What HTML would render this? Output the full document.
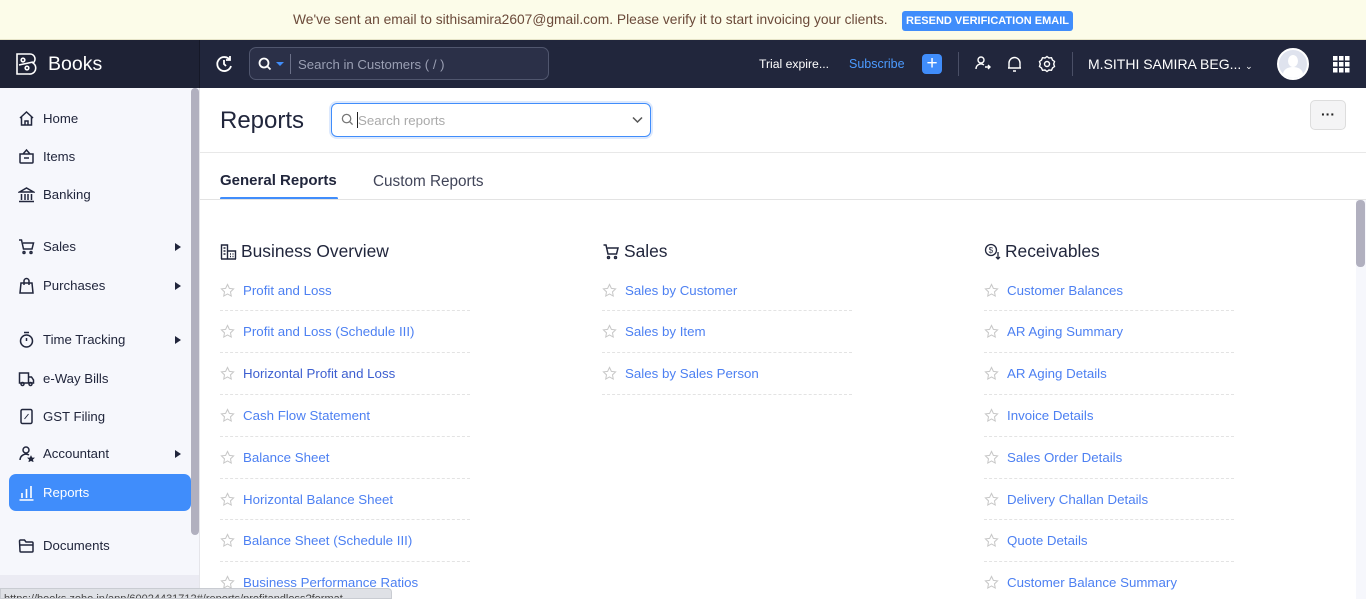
<!DOCTYPE html>
<html><head><meta charset="utf-8"><style>
*{box-sizing:border-box;margin:0;padding:0}
body{width:1366px;height:599px;overflow:hidden;font-family:"Liberation Sans",sans-serif;background:#fff;position:relative;color:#21263c}
.abs{position:absolute}
.banner{left:0;top:0;width:1366px;height:40px;background:#fcfce9;border-bottom:1px solid #e6e4c8}
.banner .t{left:293px;top:12px;font-size:13.8px;color:#6b4a3a}
.btn{left:902px;top:11px;width:171px;height:20px;background:#408dfb;color:#fff;font-size:11px;font-weight:bold;border-radius:3px;text-align:center;line-height:20px}
.top{left:0;top:40px;width:1366px;height:48px;background:#21263c}
.logo{left:0;top:40px;width:200px;height:48px;background:#1e2235;border-right:1px solid #151827}
.side{left:0;top:88px;width:200px;height:511px;background:#f6f7fc;border-right:1px solid #e5e5ea}
.nav{position:absolute;left:18px;font-size:13.2px;color:#21263c;display:flex;align-items:center;gap:8px;margin-top:1px}
.nav svg{width:17px;height:17px}
.arr{position:absolute;left:175px;width:0;height:0;border-left:6px solid #21263c;border-top:4px solid transparent;border-bottom:4px solid transparent}
.link{position:absolute;font-size:13.3px;color:#4d80f2;display:flex;align-items:center;gap:8px;margin-top:1px}
.link svg{width:15px;height:15px}
.div{position:absolute;width:250px;border-top:1px dashed #e3e3e3}
.h{position:absolute;font-size:17.4px;color:#21263c;display:flex;align-items:center;gap:4px;margin-top:1px}
</style></head><body>
<div class="abs banner"><div class="abs t">We've sent an email to sithisamira2607@gmail.com. Please verify it to start invoicing your clients.</div><div class="abs btn">RESEND VERIFICATION EMAIL</div></div>
<div class="abs top"></div>
<div class="abs logo">
<svg class="abs" style="left:15px;top:12px" width="25" height="24" viewBox="0 0 25 24" fill="none" stroke="#fff" stroke-width="1.6"><path d="M2 2h13a5 5 0 0 1 3 9a6 6 0 0 1-4 11H2z"/><circle cx="8" cy="8" r="1.8"/><circle cx="12" cy="16" r="1.8"/><path d="M4 13l14-3"/></svg>
<div class="abs" style="left:48px;top:13px;font-size:19.5px;color:#fff">Books</div></div>
<svg class="abs" style="left:215px;top:55px" width="18" height="18" viewBox="0 0 18 18" fill="none" stroke="#fff" stroke-width="1.8"><path d="M15 5A7 7 0 1 0 16 11"/><path d="M15 1v4h-4"/><path d="M9 5v4l2 2"/></svg>
<div class="abs" style="left:249px;top:47px;width:300px;height:33px;border:1px solid #50566e;border-radius:7px;background:#2b3048"></div>
<svg class="abs" style="left:258px;top:57px" width="14" height="14" viewBox="0 0 14 14" fill="none" stroke="#fff" stroke-width="1.8"><circle cx="6" cy="6" r="4.5"/><path d="M9.5 9.5l3 3"/></svg>
<div class="abs" style="left:276px;top:62px;width:0;height:0;border-top:4px solid #408dfb;border-left:4px solid transparent;border-right:4px solid transparent"></div>
<div class="abs" style="left:290px;top:54px;width:1px;height:20px;background:#6b7088"></div>
<div class="abs" style="left:298px;top:57px;font-size:13.2px;color:#9a9fb3">Search in Customers ( / )</div>
<div class="abs" style="left:759px;top:57px;font-size:12.2px;color:#fff">Trial expire...</div>
<div class="abs" style="left:849px;top:57px;font-size:12.5px;color:#4c9bff">Subscribe</div>
<div class="abs" style="left:922px;top:54px;width:20px;height:20px;background:#408dfb;border-radius:4px;color:#fff;text-align:center;font-size:19px;line-height:20px">+</div>
<div class="abs" style="left:958px;top:52px;width:1px;height:24px;background:#4a4f66"></div>
<svg class="abs" style="left:974px;top:55px" width="18" height="18" viewBox="0 0 18 18" fill="none" stroke="#fff" stroke-width="1.4"><circle cx="7" cy="5" r="3"/><path d="M2 14a5 5 0 0 1 8-4"/><path d="M11 12h5M14 10l2 2-2 2"/></svg>
<svg class="abs" style="left:1006px;top:55px" width="17" height="18" viewBox="0 0 17 18" fill="none" stroke="#fff" stroke-width="1.4"><path d="M3 13V8a5.5 5.5 0 0 1 11 0v5H3zM2 13h13M7 16h3"/></svg>
<svg class="abs" style="left:1038px;top:55px" width="18" height="18" viewBox="0 0 18 18" fill="none" stroke="#fff" stroke-width="1.4"><circle cx="9" cy="9" r="2.5"/><path d="M9 1.5l2 1.5 2.5-.3 1 2.3 2 1.5-.8 2.5.8 2.5-2 1.5-1 2.3-2.5-.3-2 1.5-2-1.5-2.5.3-1-2.3-2-1.5.8-2.5-.8-2.5 2-1.5 1-2.3 2.5.3z"/></svg>
<div class="abs" style="left:1072px;top:52px;width:1px;height:24px;background:#4a4f66"></div>
<div class="abs" style="left:1088px;top:56px;font-size:14px;color:#fff">M.SITHI SAMIRA BEG... <span style="font-size:9px">&#8964;</span></div>
<div class="abs" style="left:1277px;top:48px;width:32px;height:32px;border-radius:50%;background:#dfe3ee;border:2px solid #fff;overflow:hidden"><div class="abs" style="left:9px;top:5px;width:10px;height:12px;border-radius:50%;background:#fff"></div><div class="abs" style="left:4px;top:17px;width:20px;height:14px;border-radius:50% 50% 0 0;background:#fff"></div></div>
<svg class="abs" style="left:1333px;top:56px" width="17" height="17" viewBox="0 0 17 17" fill="#fff"><rect x="0" y="0" width="4.5" height="4.5"/><rect x="6" y="0" width="4.5" height="4.5"/><rect x="12" y="0" width="4.5" height="4.5"/><rect x="0" y="6" width="4.5" height="4.5"/><rect x="6" y="6" width="4.5" height="4.5"/><rect x="12" y="6" width="4.5" height="4.5"/><rect x="0" y="12" width="4.5" height="4.5"/><rect x="6" y="12" width="4.5" height="4.5"/><rect x="12" y="12" width="4.5" height="4.5"/></svg>

<div class="abs side">
<div class="abs" style="left:191px;top:0;width:8px;height:447px;background:#b1b0bf;border-radius:4px"></div>
<div class="abs" style="left:0;top:487px;width:199px;height:24px;background:#ebebf3"></div>
</div>
<div class="nav" style="top:109px"><svg viewBox="0 0 17 17" fill="none" stroke="#21263c" stroke-width="1.5"><path d="M2 8l6.5-6 6.5 6M3.5 7v8h10V7M7 15v-4h3v4"/></svg>Home</div>
<div class="nav" style="top:147px"><svg viewBox="0 0 17 17" fill="none" stroke="#21263c" stroke-width="1.5"><path d="M5 6l3.5-4 3.5 4M2 6h13v8a1 1 0 0 1-1 1H3a1 1 0 0 1-1-1zM6 10h5"/></svg>Items</div>
<div class="nav" style="top:185px"><svg viewBox="0 0 17 17" fill="none" stroke="#21263c" stroke-width="1.5"><path d="M1.5 6l7-4 7 4zM3.5 8v6M7 8v6M10 8v6M13.5 8v6M1 15.5h15"/></svg>Banking</div>
<div class="nav" style="top:237px"><svg viewBox="0 0 17 17" fill="none" stroke="#21263c" stroke-width="1.5"><path d="M1 2h2.5l2 9h8.5l1.5-6H5"/><circle cx="6" cy="14.5" r="1"/><circle cx="13" cy="14.5" r="1"/></svg>Sales</div><div class="arr" style="top:243px"></div>
<div class="nav" style="top:276px"><svg viewBox="0 0 17 17" fill="none" stroke="#21263c" stroke-width="1.5"><path d="M3 6h11l1 10H2zM6 8V4a2.5 2.5 0 0 1 5 0v4"/></svg>Purchases</div><div class="arr" style="top:282px"></div>
<div class="nav" style="top:330px"><svg viewBox="0 0 17 17" fill="none" stroke="#21263c" stroke-width="1.5"><circle cx="8.5" cy="10" r="6"/><path d="M6 1.5h5M8.5 10V7"/></svg>Time Tracking</div><div class="arr" style="top:336px"></div>
<div class="nav" style="top:369px"><svg viewBox="0 0 17 17" fill="none" stroke="#21263c" stroke-width="1.5"><path d="M1.5 3h9v10h-9zM10.5 7h3l2 3v3h-5"/><circle cx="4.5" cy="14" r="1.5"/><circle cx="12.5" cy="14" r="1.5"/></svg>e-Way Bills</div>
<div class="nav" style="top:407px"><svg viewBox="0 0 17 17" fill="none" stroke="#21263c" stroke-width="1.5"><rect x="3" y="1.5" width="11" height="14" rx="1.5"/><path d="M6.5 11l4-5" stroke-width="1"/></svg>GST Filing</div>
<div class="nav" style="top:444px"><svg viewBox="0 0 17 17" fill="none" stroke="#21263c" stroke-width="1.5"><circle cx="8" cy="5" r="3"/><path d="M2 15a6 6 0 0 1 9-5"/><path d="M13 11l1 2 2 0-1.5 1.5.5 2-2-1-2 1 .5-2L10 13h2z" fill="#21263c" stroke-width=".8"/></svg>Accountant</div><div class="arr" style="top:450px"></div>
<div class="abs" style="left:9px;top:474px;width:182px;height:37px;background:#408dfb;border-radius:7px"></div>
<div class="nav" style="top:483px;color:#fff"><svg viewBox="0 0 17 17" fill="none" stroke="#fff" stroke-width="1.6"><path d="M4 14V9M8.5 14V5M13 14V2M1.5 16h14"/></svg>Reports</div>
<div class="nav" style="top:536px"><svg viewBox="0 0 17 17" fill="none" stroke="#21263c" stroke-width="1.5"><path d="M1.5 4a1 1 0 0 1 1-1h4l1.5 2h6a1 1 0 0 1 1 1v8a1 1 0 0 1-1 1h-11a1 1 0 0 1-1-1zM1.5 8h14"/></svg>Documents</div>
<div class="abs" style="left:0;top:588px;width:392px;height:11px;background:#dfe1e6;border:1px solid #c9ccd2;border-radius:0 4px 0 0;font-size:11px;color:#444;overflow:hidden;line-height:20px;padding-left:3px">https://books.zoho.in/app/60024431712#/reports/profitandloss?format</div>

<div class="abs" style="left:220px;top:107px;font-size:24px;color:#21263c">Reports</div>
<div class="abs" style="left:331px;top:103px;width:320px;height:34px;border:1.5px solid #408dfb;border-radius:6px;box-shadow:0 0 0 2px #dde9fd"></div>
<svg class="abs" style="left:341px;top:113px" width="13" height="13" viewBox="0 0 14 14" fill="none" stroke="#777" stroke-width="1.4"><circle cx="6" cy="6" r="4.5"/><path d="M9.5 9.5l3 3"/></svg>
<div class="abs" style="left:357px;top:112px;width:1px;height:16px;background:#222"></div>
<div class="abs" style="left:358px;top:113px;font-size:13.3px;color:#aaa">Search reports</div>
<svg class="abs" style="left:632px;top:116px" width="11" height="8" viewBox="0 0 11 8" fill="none" stroke="#555" stroke-width="1.5"><path d="M1 1.5l4.5 4.5 4.5-4.5"/></svg>
<div class="abs" style="left:1310px;top:100px;width:36px;height:30px;background:#f4f4f5;border:1px solid #ddd;border-radius:5px;text-align:center;font-size:14px;line-height:26px;color:#222;font-weight:bold">&middot;&middot;&middot;</div>
<div class="abs" style="left:200px;top:152px;width:1166px;height:1px;background:#e8e8e8"></div>
<div class="abs" style="left:220px;top:172px;font-size:15px;font-weight:bold;color:#21263c">General Reports</div>
<div class="abs" style="left:373px;top:173px;font-size:15.3px;color:#404458">Custom Reports</div>
<div class="abs" style="left:220px;top:197px;width:118px;height:3px;background:#408dfb;border-radius:2px"></div>
<div class="abs" style="left:200px;top:199px;width:1166px;height:1px;background:#e3e3e3"></div>
<div class="abs" style="left:1356px;top:200px;width:10px;height:399px;background:#f6f7fc"></div>
<div class="abs" style="left:1356px;top:200px;width:9px;height:67px;background:#b1b0bf;border-radius:4px"></div>

<div class="h" style="left:220px;top:240px"><svg width="17" height="17" viewBox="0 0 17 17" fill="none" stroke="#21263c" stroke-width="1.4"><path d="M1.5 16V2h6v14M7.5 8h8v8M1 16h15M3.5 5h2M3.5 8h2M3.5 11h2M10 11h1M12.5 11h1M10 13.5h1M12.5 13.5h1"/></svg>Business Overview</div>
<div class="h" style="left:602px;top:240px"><svg width="18" height="17" viewBox="0 0 17 17" fill="none" stroke="#21263c" stroke-width="1.5"><path d="M1 2h2.5l2 9h8.5l1.5-6H5"/><circle cx="6" cy="14.5" r="1"/><circle cx="13" cy="14.5" r="1"/></svg>Sales</div>
<div class="h" style="left:984px;top:240px"><svg width="17" height="17" viewBox="0 0 17 17" fill="none" stroke="#21263c" stroke-width="1.3"><circle cx="7" cy="7" r="5.5"/><text x="4.6" y="10" font-size="8" fill="#21263c" stroke="none" font-family="Liberation Sans">$</text><path d="M14 9v7M12 14l2 2 2-2"/></svg>Receivables</div>

<svg width="0" height="0" style="position:absolute"><defs><symbol id="st" viewBox="0 0 16 16"><path d="M8 1.5l2 4.2 4.5.6-3.3 3.1.8 4.5L8 11.7l-4 2.2.8-4.5L1.5 6.3 6 5.7z" fill="none" stroke="#c8c8c8" stroke-width="1.1"/></symbol></defs></svg>

<div class="link" style="left:220px;top:282px"><svg><use href="#st"/></svg>Profit and Loss</div><div class="div" style="left:220px;top:310px"></div>
<div class="link" style="left:220px;top:323px"><svg><use href="#st"/></svg>Profit and Loss (Schedule III)</div><div class="div" style="left:220px;top:352px"></div>
<div class="link" style="left:220px;top:365px;color:#3d5fd0"><svg><use href="#st"/></svg>Horizontal Profit and Loss</div><div class="div" style="left:220px;top:394px"></div>
<div class="link" style="left:220px;top:407px"><svg><use href="#st"/></svg>Cash Flow Statement</div><div class="div" style="left:220px;top:436px"></div>
<div class="link" style="left:220px;top:449px"><svg><use href="#st"/></svg>Balance Sheet</div><div class="div" style="left:220px;top:478px"></div>
<div class="link" style="left:220px;top:491px"><svg><use href="#st"/></svg>Horizontal Balance Sheet</div><div class="div" style="left:220px;top:519px"></div>
<div class="link" style="left:220px;top:532px"><svg><use href="#st"/></svg>Balance Sheet (Schedule III)</div><div class="div" style="left:220px;top:561px"></div>
<div class="link" style="left:220px;top:574px"><svg><use href="#st"/></svg>Business Performance Ratios</div>

<div class="link" style="left:602px;top:282px"><svg><use href="#st"/></svg>Sales by Customer</div><div class="div" style="left:602px;top:310px"></div>
<div class="link" style="left:602px;top:323px"><svg><use href="#st"/></svg>Sales by Item</div><div class="div" style="left:602px;top:352px"></div>
<div class="link" style="left:602px;top:365px"><svg><use href="#st"/></svg>Sales by Sales Person</div><div class="div" style="left:602px;top:394px"></div>

<div class="link" style="left:984px;top:282px"><svg><use href="#st"/></svg>Customer Balances</div><div class="div" style="left:984px;top:310px"></div>
<div class="link" style="left:984px;top:323px"><svg><use href="#st"/></svg>AR Aging Summary</div><div class="div" style="left:984px;top:352px"></div>
<div class="link" style="left:984px;top:365px"><svg><use href="#st"/></svg>AR Aging Details</div><div class="div" style="left:984px;top:394px"></div>
<div class="link" style="left:984px;top:407px"><svg><use href="#st"/></svg>Invoice Details</div><div class="div" style="left:984px;top:436px"></div>
<div class="link" style="left:984px;top:449px"><svg><use href="#st"/></svg>Sales Order Details</div><div class="div" style="left:984px;top:478px"></div>
<div class="link" style="left:984px;top:491px"><svg><use href="#st"/></svg>Delivery Challan Details</div><div class="div" style="left:984px;top:519px"></div>
<div class="link" style="left:984px;top:532px"><svg><use href="#st"/></svg>Quote Details</div><div class="div" style="left:984px;top:561px"></div>
<div class="link" style="left:984px;top:574px"><svg><use href="#st"/></svg>Customer Balance Summary</div>
</body></html>
